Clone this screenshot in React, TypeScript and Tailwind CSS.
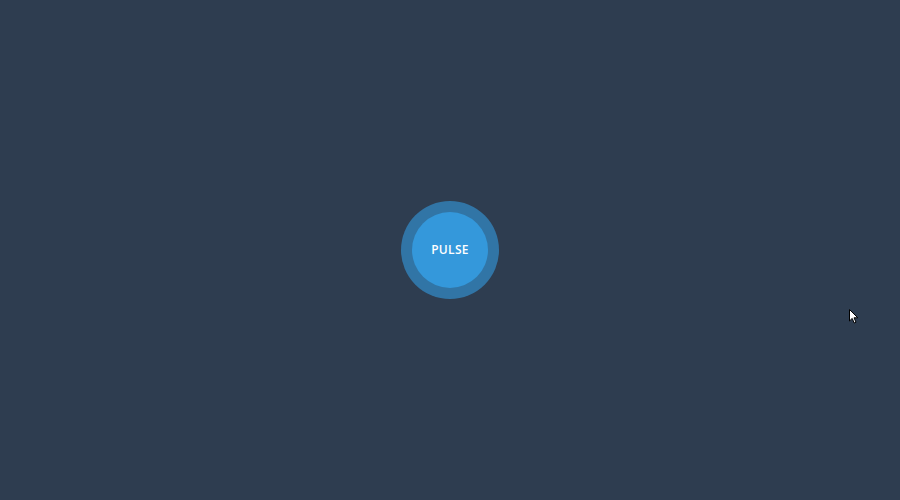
export default function App() {
  return (
    <div className="relative flex h-[500px] w-full items-center justify-center bg-[#2e3d50]">
      {/* Pulse button with ring */}
      <button className="flex h-[76px] w-[76px] items-center justify-center rounded-full bg-[#3498db] text-[12px] font-semibold tracking-wide text-white shadow-[0_0_0_11px_rgba(52,152,219,0.62)] [font-family:'Open_Sans',sans-serif]">
        PULSE
      </button>

      {/* Mouse cursor */}
      <svg className="absolute left-[849px] top-[309px]" width="10" height="15" viewBox="0 0 10 15">
        <path d="M0.5 0.5 L0.5 12 L3.2 9.4 L5.2 14 L7 13.2 L5 8.8 L8.8 8.8 Z" fill="#fff" stroke="#000" strokeWidth="1" />
      </svg>
    </div>
  );
}
